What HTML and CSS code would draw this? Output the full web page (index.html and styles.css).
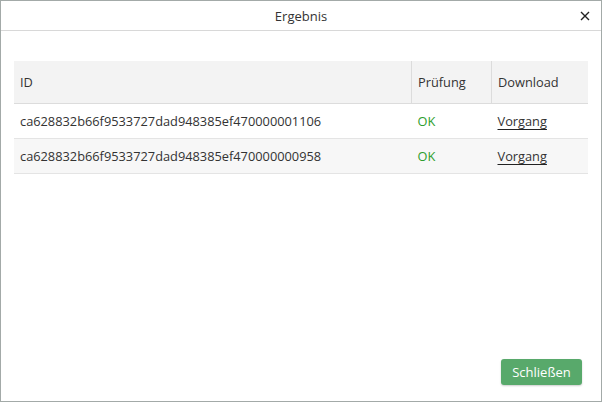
FILE: index.html
```html
<!DOCTYPE html>
<html>
<head>
<meta charset="utf-8">
<link rel="stylesheet" href="styles.css">
</head>
<body>
<div class="dialog">
  <div class="header">
    <span class="title">Ergebnis</span>
    <span class="close">
      <svg width="10" height="10" viewBox="0 0 10 10"><path d="M1 1L9 9M9 1L1 9" stroke="#222" stroke-width="1.4" fill="none"/></svg>
    </span>
  </div>
  <div class="body">
    <table class="results">
      <thead>
        <tr><th class="c-id">ID</th><th class="c-check">Prüfung</th><th class="c-dl">Download</th></tr>
      </thead>
      <tbody>
        <tr><td>ca628832b66f9533727dad948385ef470000001106</td><td class="ok">OK</td><td><a class="link">Vorgang</a></td></tr>
        <tr class="alt"><td>ca628832b66f9533727dad948385ef470000000958</td><td class="ok">OK</td><td><a class="link">Vorgang</a></td></tr>
      </tbody>
    </table>
  </div>
  <div class="footer">
    <button class="btn">Schließen</button>
  </div>
</div>
</body>
</html>
```
FILE: styles.css
```css
html, body { margin: 0; padding: 0; background: #fff; }
body { font-family: "Open Sans", "Noto Sans", sans-serif; font-size: 13px; color: #333; }
.dialog {
  width: 600px; height: 400px;
  border: 1px solid #a3aaa8;
  display: flex; flex-direction: column;
}
.header {
  height: 29px; border-bottom: 1px solid #d8d8d8;
  display: flex; align-items: center; justify-content: center;
  position: relative;
}
.title { color: #333; }
.close { position: absolute; right: 11px; top: 10px; width: 10px; height: 10px; display: flex; }
.body { flex: 1; padding: 30px 13px 0 13px; }
.results { width: 574px; border-collapse: collapse; font-size: 12.8px; }
.results th {
  background: #f3f3f3; font-weight: normal; text-align: left;
  height: 42px; padding: 0 6px; border-bottom: 1px solid #dcdcdc; color: #333;
}
.results th + th { border-left: 1px solid #dcdcdc; }
.c-id { width: 385px; }
.c-check { width: 67px; }
.results td { height: 34px; padding: 0 6px; border-bottom: 1px solid #e4e4e4; color: #333; }
.results tr.alt td { background: #f7f7f7; }
.results td.ok { color: #2e9e2e; }
.link { color: #333; text-decoration: underline; text-decoration-color: #222; text-underline-offset: 3px; }
.footer { display: flex; justify-content: flex-end; padding: 0 19px 16px 0; }
.btn {
  font-family: inherit; font-size: 13px; color: #fff;
  background: #58a96b; border: none; border-radius: 3px;
  width: 81px; height: 26px; padding: 0;
  box-shadow: 0 1px 2px rgba(0,0,0,0.2);
}
```
